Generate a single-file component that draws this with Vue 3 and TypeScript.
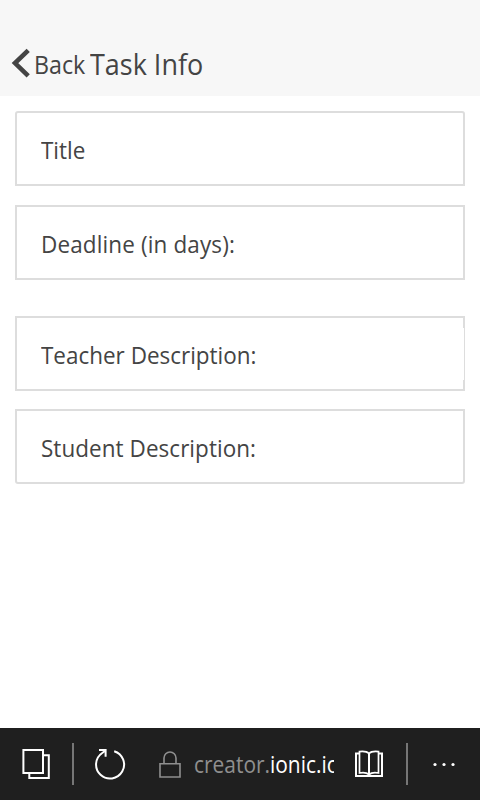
<script setup lang="ts">
interface Field {
  id: string
  label: string
  notched?: boolean
}

const groups: Field[][] = [
  [
    { id: 'title', label: 'Title' },
    { id: 'deadline', label: 'Deadline (in days):' },
  ],
  [
    { id: 'teacher', label: 'Teacher Description:', notched: true },
    { id: 'student', label: 'Student Description:' },
  ],
]
</script>

<template>
  <div class="screen">
    <header class="header">
      <button class="back" type="button">
        <svg class="chevron" width="20" height="32" viewBox="0 0 20 32">
          <path d="M18.2 3.3 L5 16.1 L18.2 28.9" fill="none" stroke="#444" stroke-width="4.6" />
        </svg>
        <span class="back-label">Back</span>
      </button>
      <h1 class="heading">Task Info</h1>
    </header>

    <main class="form">
      <section v-for="(group, i) in groups" :key="i" class="group">
        <label
          v-for="field in group"
          :key="field.id"
          class="field"
          :class="[field.id, { notched: field.notched }]"
        >
          <span class="label">{{ field.label }}</span>
        </label>
      </section>
    </main>

    <footer class="bar">
      <svg class="tabs" width="30" height="32" viewBox="0 0 30 32" fill="none" stroke="#fff" stroke-width="2">
        <path d="M2.4 2H22V25H2.4Z" />
        <path d="M22 7.3H27.8V30H8.3V25" />
      </svg>
      <span class="rule first"></span>
      <svg class="reload" width="32" height="34" viewBox="0 0 32 34" fill="none" stroke="#fff" stroke-width="2">
        <path d="M20.2 4.2A14 14 0 1 1 8.2 6L11 4" />
        <path d="M5 3.1H11.6V9.7" />
      </svg>
      <svg class="lock" width="22" height="28" viewBox="0 0 22 28" fill="none" stroke="#8f8f8f" stroke-width="1.6">
        <path d="M1 13.8H21V27H1Z" />
        <path d="M5 13.8V8A6 6 0 0 1 17 8V13.8" />
      </svg>
      <div class="address">
        <div class="url"><span class="sub">creator.</span><span class="domain">ionic.io</span></div>
      </div>
      <svg class="book" width="30" height="28" viewBox="0 0 30 28" fill="none" stroke="#fff">
        <path d="M5 3.5H2V26H28V3.5H25" stroke-width="2" />
        <path d="M15 3.5C12.5 1 9 1.2 5.5 1.6V23C9 22.4 12.5 22.4 15 24.5C17.5 22.4 21 22.4 24.5 23V1.6C21 1.2 17.5 1 15 3.5Z" stroke-width="1.7" />
        <path d="M15 3V26" stroke-width="2" />
      </svg>
      <span class="rule second"></span>
      <svg class="more" width="24" height="6" viewBox="0 0 24 6" fill="#fff">
        <circle cx="3" cy="3.5" r="1.6" />
        <circle cx="12" cy="3.5" r="1.6" />
        <circle cx="21" cy="3.5" r="1.6" />
      </svg>
    </footer>
  </div>
</template>

<style>
body {
  margin: 0;
  background: #fff;
}
</style>

<style scoped>
.screen {
  display: flex;
  flex-direction: column;
  width: 480px;
  height: 800px;
  overflow: hidden;
  background: #fff;
  color: #444;
  font-family: 'Open Sans', 'Noto Sans', sans-serif;
}

.header {
  box-sizing: border-box;
  display: flex;
  align-items: center;
  flex: none;
  height: 96px;
  padding: 32px 0 0 10px;
  background: #f7f7f7;
}

.back {
  display: flex;
  align-items: center;
  width: 79.5px;
  padding: 0;
  border: 0;
  background: none;
  color: inherit;
  font-family: inherit;
}

.chevron {
  flex: none;
  margin-top: -2px;
}

.back-label {
  margin-left: 3.5px;
  font-size: 25px;
  line-height: 34px;
  transform: scaleX(0.93);
  transform-origin: left;
}

.heading {
  margin: 0;
  font-size: 29px;
  font-weight: 400;
  line-height: 40px;
  white-space: nowrap;
  transform: scaleX(0.93);
  transform-origin: left;
}

.form {
  display: flex;
  flex: 1;
  flex-direction: column;
  gap: 36px;
  padding: 15px 15px 0;
}

.group {
  display: flex;
  flex-direction: column;
  gap: 19px;
}

.group + .group {
  gap: 18px;
}

.field {
  position: relative;
  box-sizing: border-box;
  display: flex;
  align-items: center;
  height: 75px;
  padding: 3px 0 0 24px;
  border: 2px solid #ddd;
}

.field.title {
  border-radius: 3px 3px 0 0;
}

.field.student {
  border-radius: 0 0 3px 3px;
}

.notched::after {
  position: absolute;
  top: 10px;
  right: -1px;
  width: 1px;
  height: 52px;
  background: #fff;
  content: '';
}

.label {
  font-size: 24px;
  line-height: 32px;
  white-space: nowrap;
  transform: scaleX(0.936);
  transform-origin: left;
}

.deadline .label {
  letter-spacing: 0.15px;
}

.student .label {
  letter-spacing: 0.06px;
}

.bar {
  display: flex;
  align-items: center;
  flex: none;
  height: 72px;
  background: #1f1f1f;
}

.bar > * {
  flex: none;
}

.tabs {
  margin-left: 21px;
}

.rule {
  width: 2px;
  height: 42px;
  background: #767676;
}

.first {
  margin-left: 21px;
}

.reload {
  margin-left: 20px;
}

.lock {
  margin-left: 33px;
}

.address {
  width: 140px;
  margin-left: 13px;
  overflow: hidden;
  font-size: 23.5px;
  line-height: 34px;
  white-space: nowrap;
}

.url {
  transform: scaleX(0.89);
  transform-origin: left;
}

.sub {
  color: #8f8f8f;
}

.domain {
  color: #fff;
}

.book {
  margin-left: 20px;
}

.second {
  margin-left: 22px;
}

.more {
  margin-left: 24px;
}
</style>
